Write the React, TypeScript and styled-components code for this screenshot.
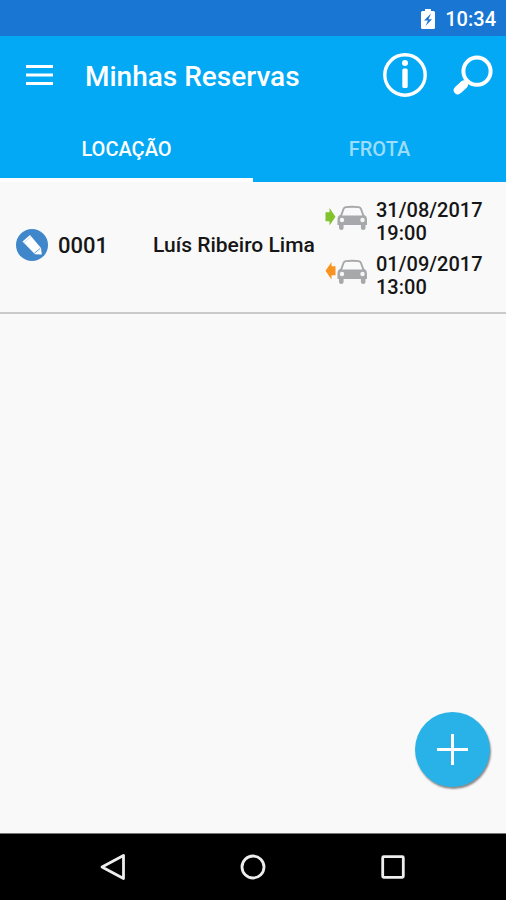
import React, { useState } from "react";
import styled, { createGlobalStyle } from "styled-components";

const GlobalStyle = createGlobalStyle`
  * { box-sizing: border-box; }
  html, body, #root { height: 100%; }
  body {
    margin: 0;
    background: #f9f9f9;
    color: #161616;
    font-family: Roboto, "Liberation Sans", sans-serif;
  }
  button {
    padding: 0;
    border: 0;
    background: none;
    color: inherit;
    font: inherit;
    cursor: pointer;
  }
  svg { display: block; flex: none; }
`;

const Screen = styled.div`
  display: flex;
  flex-direction: column;
  min-height: 100%;
`;

const StatusBar = styled.div`
  display: flex;
  align-items: center;
  justify-content: flex-end;
  gap: 10px;
  height: 36px;
  padding: 2px 10px 0 0;
  background: #1976d2;
  color: #fff;
  font-size: 20px;
  font-weight: 500;
`;

const AppBar = styled.header`
  display: flex;
  align-items: center;
  height: 78px;
  padding: 0 13px 0 26px;
  background: #03a9f4;
  color: #fff;
`;

const Title = styled.h1`
  flex: 1;
  margin: 0;
  padding: 4px 0 0 32px;
  font-size: 28px;
  line-height: 32px;
  font-weight: 500;
`;

const Actions = styled.div`
  display: flex;
  align-items: center;
  gap: 26px;
`;

const Tabs = styled.div`
  display: flex;
  height: 68px;
  background: #03a9f4;
`;

const Tab = styled.button<{ $active: boolean }>`
  && {
    flex: 1;
    padding-top: 6px;
    border-bottom: 4px solid ${(p) => (p.$active ? "#fdfdfd" : "#03a9f4")};
    color: ${(p) => (p.$active ? "#fff" : "#9bddfb")};
    font-size: 20px;
    font-weight: 500;
  }
`;

const List = styled.ul`
  flex: 1;
  margin: 0;
  padding: 0;
  list-style: none;
`;

const Reservation = styled.li`
  display: flex;
  align-items: center;
  padding: 17px 16px 13px;
  border-bottom: 2px solid #cacaca;
  font-size: 20px;
  line-height: 23px;
  font-weight: 500;
`;

const Summary = styled.div`
  display: flex;
  flex: 1;
  align-items: center;
  padding-bottom: 8px;
`;

const Code = styled.span`
  width: 95px;
  margin-left: 10px;
  font-size: 22px;
`;

const Customer = styled.span`
  flex: 1;
  font-size: 21px;
  white-space: nowrap;
`;

const Trips = styled.div`
  display: grid;
  gap: 8px;
  width: 165px;
`;

const Trip = styled.div`
  display: flex;
  gap: 8px;
`;

const When = styled.time`
  flex: 1;
`;

const Fab = styled.button`
  && {
    position: fixed;
    right: 16px;
    bottom: 113px;
    display: grid;
    place-items: center;
    width: 75px;
    height: 75px;
    border-radius: 50%;
    background: #29b2e8;
    box-shadow: 1px 2px 2px rgba(0, 0, 0, 0.45);
  }
`;

const NavBar = styled.nav`
  display: flex;
  justify-content: center;
  gap: 112px;
  height: 67px;
  border-top: 1px solid #777;
  background: #000;
`;

function BatteryIcon() {
  return (
    <svg width="14" height="20" viewBox="0 0 14 20" aria-hidden="true">
      <path d="M4 0h6v2h2.500q1.500 0 1.500 1.500v15q0 1.500-1.500 1.500h-11Q0 20 0 18.500v-15Q0 2 1.500 2H4z" fill="#fff" />
      <path d="M10 4.500 3 11.500h4L4.500 17 11 10.200H7.500z" fill="#1976d2" />
    </svg>
  );
}

function MenuIcon() {
  return (
    <svg width="27" height="20" viewBox="0 0 27 20" aria-hidden="true">
      <path d="M0 1.500h27M0 10h27M0 18.500h27" stroke="#fff" strokeWidth="3" />
    </svg>
  );
}

function InfoIcon() {
  return (
    <svg width="44" height="44" viewBox="0 0 44 44" aria-hidden="true">
      <circle cx="22" cy="22" r="20.200" fill="none" stroke="#fff" strokeWidth="3.400" />
      <circle cx="22" cy="10" r="3" fill="#fff" />
      <rect x="19.300" y="15.500" width="5.400" height="19.500" rx="1.500" fill="#fff" />
    </svg>
  );
}

function SearchIcon() {
  return (
    <svg width="40" height="40" viewBox="0 0 40 40" aria-hidden="true">
      <circle cx="24" cy="16.200" r="13.600" fill="none" stroke="#fff" strokeWidth="4" />
      <path d="m15.500 25.500-4 3.500" stroke="#fff" strokeWidth="5" />
      <path d="m11.500 29-6.500 6" stroke="#fff" strokeWidth="8" />
      <path d="m11 29.500-6.300 5.800" stroke="#fff" strokeWidth="8" strokeLinecap="round" />
    </svg>
  );
}

function EditIcon() {
  return (
    <svg width="32" height="32" viewBox="0 0 32 32" aria-hidden="true">
      <circle cx="16" cy="16" r="16" fill="#3f87ca" />
      <path d="m6.500 12.500 7.500-6.500 11 13 .8 6.500-6.800-.3z" fill="#fff" />
      <path d="m18.300 24.300 6-5" stroke="#3f87ca" strokeWidth=".8" />
      <path d="m7.800 13.800 7.300-6.300" stroke="#a7c8e7" strokeWidth=".6" />
    </svg>
  );
}

function CarIcon({ returning = false }: { returning?: boolean }) {
  return (
    <svg width="43" height="32" viewBox="0 0 43 32" aria-hidden="true">
      {returning ? (
        <path d="M.5 17.700 6.500 9v4.200H10.500v9H6.500v4.300z" fill="#f7931e" />
      ) : (
        <path d="M10.500 17.700 4.500 9v4.200H.5v9h4v4.300z" fill="#80c32c" />
      )}
      <path
        fillRule="evenodd"
        fill="#a6a8ab"
        d="M20.500 7.200q6.500-.8 13.500 0 2 .3 2.800 2.300l2.300 6.200q2.900 1.300 2.900 4.300v6h-1.500v3q0 2-2.300 2t-2.300-2v-3H18.600v3q0 2-2.300 2t-2.300-2v-3h-1.500v-6q0-3 2.900-4.300l2.300-6.200q.8-2 2.800-2.300zM21 9q-1.200.2-1.600 1.300l-2.200 6.200h20.100l-2.200-6.200Q34.700 9.200 33.500 9q-6.500-.6-12.500 0z"
      />
      <circle cx="17" cy="21" r="2.200" fill="#f6f6f6" />
      <circle cx="37.500" cy="21" r="2.200" fill="#f6f6f6" />
    </svg>
  );
}

const trips = [
  { date: "31/08/2017", time: "19:00", iso: "2017-08-31T19:00", returning: false },
  { date: "01/09/2017", time: "13:00", iso: "2017-09-01T13:00", returning: true },
];

export default function App() {
  const [tab, setTab] = useState("LOCAÇÃO");
  return (
    <Screen>
      <GlobalStyle />
      <StatusBar>
        <BatteryIcon />
        <span>10:34</span>
      </StatusBar>
      <AppBar>
        <button aria-label="Menu"><MenuIcon /></button>
        <Title>Minhas Reservas</Title>
        <Actions>
          <button aria-label="Informações"><InfoIcon /></button>
          <button aria-label="Buscar"><SearchIcon /></button>
        </Actions>
      </AppBar>
      <Tabs role="tablist">
        {["LOCAÇÃO", "FROTA"].map((name) => (
          <Tab key={name} role="tab" aria-selected={tab === name} $active={tab === name} onClick={() => setTab(name)}>
            {name}
          </Tab>
        ))}
      </Tabs>
      <List>
        <Reservation>
          <Summary>
            <button aria-label="Editar"><EditIcon /></button>
            <Code>0001</Code>
            <Customer>Luís Ribeiro Lima</Customer>
          </Summary>
          <Trips>
            {trips.map((trip) => (
              <Trip key={trip.iso}>
                <CarIcon returning={trip.returning} />
                <When dateTime={trip.iso}>
                  {trip.date}
                  <br />
                  {trip.time}
                </When>
              </Trip>
            ))}
          </Trips>
        </Reservation>
      </List>
      <Fab aria-label="Adicionar">
        <svg width="31" height="31" viewBox="0 0 31 31" aria-hidden="true">
          <path d="M15.500 0v31M0 15.500h31" stroke="#fff" strokeWidth="3" />
        </svg>
      </Fab>
      <NavBar>
        <button aria-label="Voltar">
          <svg width="28" height="28" viewBox="0 0 28 28" aria-hidden="true">
            <path d="M3 14 24.500 2.500v23z" fill="none" stroke="#eee" strokeWidth="2.800" strokeLinejoin="round" />
          </svg>
        </button>
        <button aria-label="Início">
          <svg width="28" height="28" viewBox="0 0 28 28" aria-hidden="true">
            <circle cx="14" cy="14" r="11" fill="none" stroke="#eee" strokeWidth="2.800" />
          </svg>
        </button>
        <button aria-label="Recentes">
          <svg width="28" height="28" viewBox="0 0 28 28" aria-hidden="true">
            <rect x="3.700" y="3.700" width="20.600" height="20.600" rx="1" fill="none" stroke="#eee" strokeWidth="2.800" />
          </svg>
        </button>
      </NavBar>
    </Screen>
  );
}
